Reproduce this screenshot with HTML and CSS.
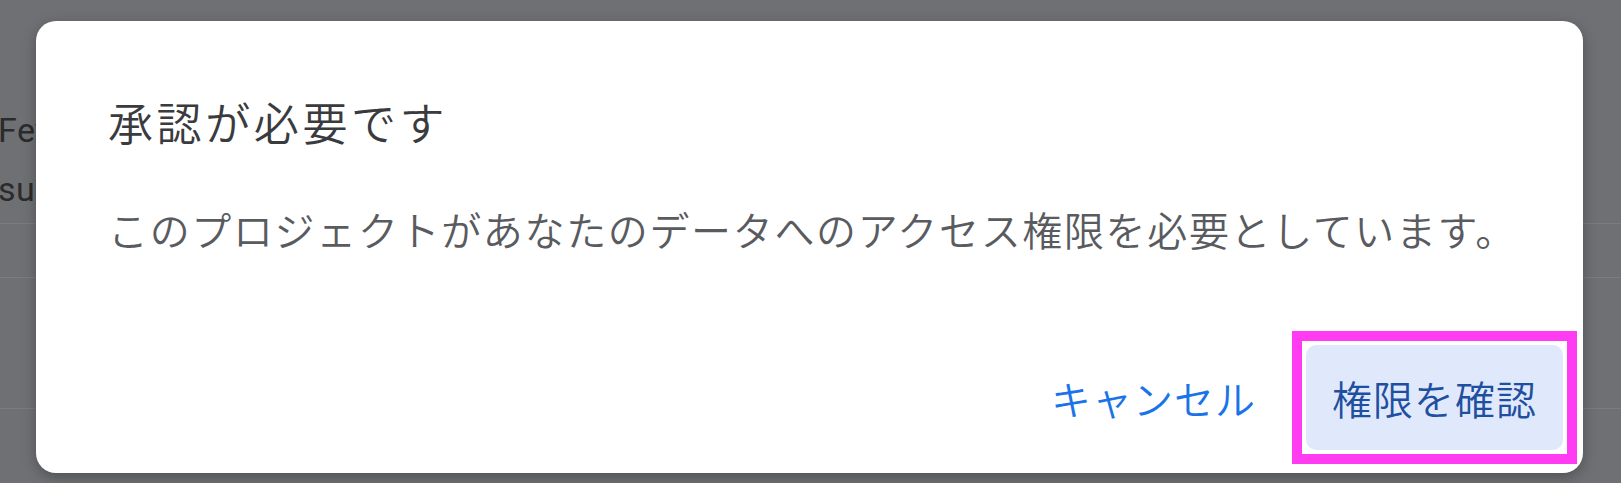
FILE: index.html
```html
<!DOCTYPE html>
<html lang="ja">
<head>
<meta charset="utf-8">
<title>承認が必要です</title>
<link rel="stylesheet" href="styles.css">
</head>
<body>
<div class="page">
  <div class="row row-top">
    <p class="bg-line">Fetch</p>
    <p class="bg-line">sum</p>
  </div>
  <div class="row row-mid"></div>
  <div class="row row-low"></div>
</div>
<div class="dialog" role="dialog" aria-labelledby="dlg-title">
  <h2 class="dialog-title" id="dlg-title">承認が必要です</h2>
  <p class="dialog-body">このプロジェクトがあなたのデータへのアクセス権限を必要としています。</p>
  <div class="dialog-actions">
    <button class="btn btn-text" type="button">キャンセル</button>
    <button class="btn btn-tonal" type="button">権限を確認</button>
  </div>
</div>
</body>
</html>
```
FILE: styles.css
```css
* { box-sizing: border-box; }
html, body {
  margin: 0;
  height: 100%;
}
body {
  background: #6f7073;
  font-family: "Noto Sans CJK JP", "Noto Sans", sans-serif;
  overflow: hidden;
}
.page {
  display: flex;
  flex-direction: column;
  margin-left: -2px;
}
.row { border-bottom: 1px solid #7b7c7f; }
.row-top {
  height: 224px;
  padding-top: 101px;
}
.row-mid { height: 54px; }
.row-low { height: 131px; }
.bg-line {
  margin: 0;
  font-family: Roboto, "Liberation Sans", sans-serif;
  font-size: 34px;
  line-height: 59px;
  color: #2a2b2d;
  white-space: nowrap;
  letter-spacing: 0.5px;
}
.dialog {
  position: absolute;
  left: 36px;
  top: 21px;
  width: 1547px;
  background: #ffffff;
  border-radius: 20px;
  box-shadow: 0 4px 14px rgba(0, 0, 0, 0.28);
}
.dialog-title {
  margin: 0;
  padding: 71px 72px 0;
  font-size: 45px;
  line-height: 60px;
  font-weight: 350;
  color: #3a3b3e;
  letter-spacing: 3.6px;
}
.dialog-body {
  margin: 0;
  padding: 47px 30px 0 72px;
  font-size: 40px;
  line-height: 60px;
  font-weight: 350;
  color: #595b5f;
  letter-spacing: 1.65px;
  white-space: nowrap;
}
.dialog-actions {
  display: flex;
  justify-content: flex-end;
  align-items: center;
  gap: 24px;
  padding: 86px 20px 23px;
}
.btn {
  position: relative;
  border: 0;
  height: 105px;
  padding: 0 26px;
  font-family: inherit;
  font-size: 40px;
  font-weight: 350;
  border-radius: 10px;
  background: transparent;
  letter-spacing: 1px;
  white-space: nowrap;
}
.btn-text { color: #1a73e8; }
.btn-tonal {
  min-width: 256px;
  background: #e0e9fb;
  color: #1f4fa0;
}
.btn-tonal::after {
  content: "";
  position: absolute;
  inset: -14px;
  border: 10px solid #ff3cf2;
  pointer-events: none;
}
```
